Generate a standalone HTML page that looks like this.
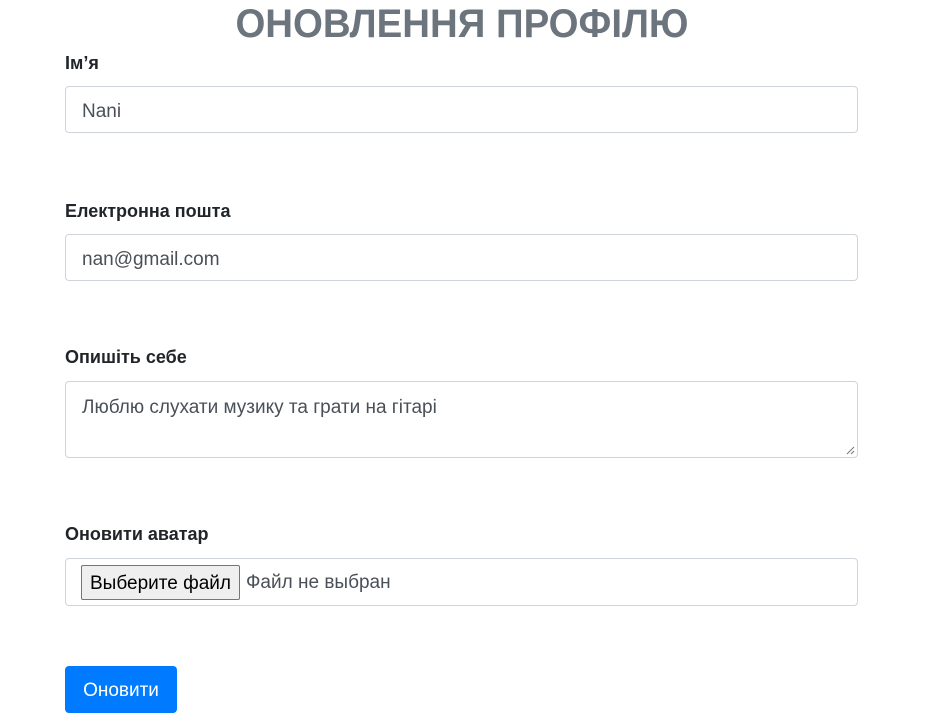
<!DOCTYPE html>
<html><head><meta charset="utf-8"><style>
body{margin:0;background:#fff;font-family:"Liberation Sans",sans-serif;color:#212529;width:948px;height:725px;overflow:hidden;position:relative}
.t{position:absolute;top:2px;left:0;width:924px;text-align:center;font-size:40px;font-weight:bold;color:#6c757d;transform:scaleX(0.96);transform-origin:462px 0}
.l{position:absolute;left:65px;font-weight:bold;font-size:18px}
.i{position:absolute;left:65px;border:1px solid #ced4da;border-radius:4px;box-sizing:border-box;width:793px;font-size:19px;color:#495057;padding-left:16px}
.b{position:absolute;left:65px;top:666px;width:112px;height:47px;background:#007bff;border-radius:4px;color:#fff;font-size:19px;line-height:49px;text-align:center}
.f{display:inline-block;background:#efefef;border:1px solid #767676;border-radius:2px;color:#000;padding:0 8px;height:33px;line-height:35px;margin-right:6px;vertical-align:middle}
</style></head><body>
<div class="t">ОНОВЛЕННЯ ПРОФІЛЮ</div>
<div class="l" style="top:53px">Ім’я</div>
<div class="i" style="top:86px;height:47px;line-height:49px">Nani</div>
<div class="l" style="top:201px">Електронна пошта</div>
<div class="i" style="top:234px;height:47px;line-height:49px">nan@gmail.com</div>
<div class="l" style="top:347px">Опишіть себе</div>
<div class="i" style="top:381px;height:77px;line-height:24px;padding-top:14px">Люблю слухати музику та грати на гітарі
<svg style="position:absolute;right:2px;bottom:2px" width="10" height="10"><path d="M9 2L2 9M9 6L6 9" stroke="#777" stroke-width="1"/></svg></div>
<div class="l" style="top:524px">Оновити аватар</div>
<div class="i" style="top:558px;height:48px;line-height:46px;padding-left:15px;padding-top:1px"><span class="f">Выберите файл</span>Файл не выбран</div>
<div class="b">Оновити</div>
</body></html>
